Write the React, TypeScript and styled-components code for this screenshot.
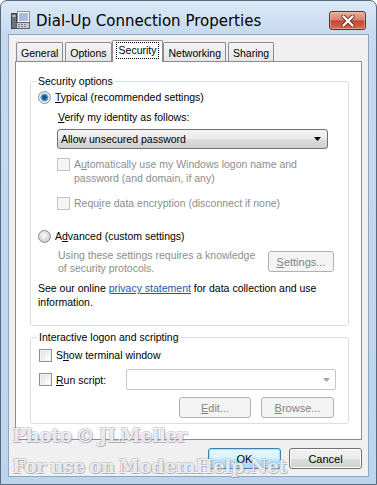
import React from 'react';
import styled, { createGlobalStyle } from 'styled-components';

const GlobalStyle = createGlobalStyle`
  html, body {
    margin: 0;
    padding: 0;
    background: #ffffff;
  }
  body {
    font-family: "Liberation Sans", Arial, sans-serif;
    font-size: 10.5px;
    color: #000;
  }
  * {
    box-sizing: border-box;
  }
`;

const Window = styled.div`
  position: relative;
  width: 377px;
  height: 485px;
  border: 1px solid #56697f;
  border-radius: 7px 7px 0 0;
  background: linear-gradient(180deg, #dce9f7 0px, #c6daf0 32px, #bcd4ee 100%);
  display: flex;
  flex-direction: column;
  overflow: hidden;
`;

const TitleBar = styled.div`
  height: 33px;
  flex: none;
  display: flex;
  align-items: center;
  padding: 6px 10px 0 10px;
`;

const TitleText = styled.div`
  flex: 1;
  margin-left: 6px;
  font-family: "DejaVu Sans", sans-serif;
  font-size: 15px;
  color: #000;
`;

const CloseButton = styled.div`
  width: 37px;
  height: 19px;
  border: 1px solid #6a2a22;
  border-radius: 3px;
  background: linear-gradient(180deg, #e9ab9c 0%, #d98572 45%, #c24a33 52%, #cf6b51 100%);
  box-shadow: inset 0 0 0 1px rgba(255, 210, 200, 0.45);
  display: flex;
  align-items: center;
  justify-content: center;
`;

const Client = styled.div`
  flex: 1;
  margin: 0 7px 7px;
  border: 1px solid #8ea4bf;
  background: #f0f0f0;
  display: flex;
  flex-direction: column;
  padding: 5px 6px 7px;
`;

const TabRow = styled.div`
  display: flex;
  align-items: flex-end;
  height: 21px;
  padding-left: 1px;
  gap: 2px;
  position: relative;
  z-index: 1;
`;

const Tab = styled.div<{ $active?: boolean }>`
  height: ${p => (p.$active ? 22 : 19)}px;
  margin: 0 ${p => (p.$active ? -2 : 0)}px ${p => (p.$active ? -1 : 0)}px;
  padding: ${p => (p.$active ? '2px 4px 0' : '3px 4px 0')};
  border: 1px solid #898c95;
  border-bottom: none;
  border-radius: 2px 2px 0 0;
  background: ${p => (p.$active ? '#ffffff' : 'linear-gradient(180deg, #f4f4f4 0%, #e6e6e6 100%)')};
  line-height: 14px;
  white-space: nowrap;
  position: relative;
  z-index: ${p => (p.$active ? 2 : 1)};
`;

const FocusText = styled.span`
  display: inline-block;
  outline: 1px dotted #000;
  outline-offset: 0;
  padding: 0 2px;
  line-height: 15px;
`;

const Panel = styled.div`
  flex: 1;
  border: 1px solid #898c95;
  background: #ffffff;
  padding: 12px 12px 15px 14px;
  display: flex;
  flex-direction: column;
  gap: 4px;
`;

const Group = styled.fieldset<{ $top: number; $right: number; $bottom: number; $left: number }>`
  margin: 0;
  min-width: 0;
  border: 1px solid #d5dfe5;
  border-radius: 3px;
  padding: ${p => `${p.$top}px ${p.$right}px ${p.$bottom}px ${p.$left}px`};
  display: flex;
  flex-direction: column;
`;

const Legend = styled.legend`
  padding: 0 2px;
  margin-left: -2px;
  line-height: 14px;
  font-size: 10.5px;
`;

const OptionRow = styled.div<{ $mt?: number; $disabled?: boolean }>`
  display: flex;
  align-items: flex-start;
  gap: 4px;
  margin-top: ${p => p.$mt ?? 0}px;
  line-height: 14px;
  white-space: nowrap;
  color: ${p => (p.$disabled ? '#8d8d8d' : '#000')};
`;

const Text = styled.div<{ $mt?: number; $disabled?: boolean; $lh?: number }>`
  margin-top: ${p => p.$mt ?? 0}px;
  line-height: ${p => p.$lh ?? 14}px;
  white-space: nowrap;
  color: ${p => (p.$disabled ? '#8d8d8d' : '#000')};
`;

const Key = styled.span`
  text-decoration: underline;
`;

const Link = styled.span`
  color: #1a5aa6;
  text-decoration: underline;
`;

const Radio = styled.span<{ $checked?: boolean }>`
  flex: none;
  width: 13px;
  height: 13px;
  margin-top: 1px;
  border-radius: 50%;
  border: 1px solid #8b8c8d;
  background: ${p =>
    p.$checked
      ? 'radial-gradient(circle at 50% 50%, #12456f 0, #1f6597 2px, #4fa6d6 3.4px, #dfeef7 4.4px, #f2f2f2 5.5px)'
      : 'radial-gradient(circle at 45% 40%, #fbfbfb 0, #e6e6e6 3px, #cfcfcf 6px)'};
`;

const Check = styled.span<{ $disabled?: boolean }>`
  flex: none;
  width: 13px;
  height: 13px;
  margin-top: 1px;
  border: 1px solid ${p => (p.$disabled ? '#c2c2c2' : '#8e8f8f')};
  background: ${p =>
    p.$disabled ? '#f4f4f4' : 'linear-gradient(135deg, #dcdcdc 0%, #f3f3f3 60%, #ffffff 100%)'};
  box-shadow: inset 0 0 0 1px ${p => (p.$disabled ? '#f7f7f7' : '#f4f4f4')};
`;

const Indent = styled.div`
  display: flex;
  flex-direction: column;
  padding-left: 20px;
`;

const Select = styled.div<{ $mt?: number }>`
  width: 271px;
  height: 20px;
  margin: ${p => p.$mt ?? 0}px 0 0 -1px;
  border: 1px solid #707070;
  border-radius: 3px;
  background: linear-gradient(180deg, #f3f3f3 0%, #ebebeb 50%, #dddddd 51%, #cfcfcf 100%);
  display: flex;
  align-items: center;
  justify-content: space-between;
  padding: 0 6px 0 3px;
`;

const Combo = styled.div`
  flex: 1;
  height: 21px;
  border: 1px solid #c6c6c6;
  border-radius: 2px;
  background: #ffffff;
  display: flex;
  align-items: center;
  justify-content: flex-end;
  padding-right: 5px;
`;

const Button = styled.div<{ $w: number; $variant?: 'normal' | 'default' | 'disabled' }>`
  flex: none;
  width: ${p => p.$w}px;
  height: 21px;
  border-radius: 3px;
  display: flex;
  align-items: center;
  justify-content: center;
  font-size: 11px;
  border: 1px solid
    ${p => (p.$variant === 'disabled' ? '#adb2b5' : p.$variant === 'default' ? '#3c7fb1' : '#707070')};
  color: ${p => (p.$variant === 'disabled' ? '#838383' : '#000')};
  background: ${p =>
    p.$variant === 'disabled'
      ? '#f4f4f4'
      : p.$variant === 'default'
      ? 'linear-gradient(180deg, #eaf6fd 0%, #d9f0fc 50%, #bee6fd 51%, #a7d9f5 100%)'
      : 'linear-gradient(180deg, #f2f2f2 0%, #ebebeb 50%, #dddddd 51%, #cfcfcf 100%)'};
  box-shadow: ${p =>
    p.$variant === 'default' ? 'inset 0 0 0 1px #9ee4f8' : p.$variant === 'disabled' ? 'none' : 'inset 0 0 0 1px #fcfcfc'};
`;

const SettingsRow = styled.div`
  display: flex;
  justify-content: space-between;
  align-items: flex-start;
  margin-top: 6px;
`;

const ScriptRow = styled.div`
  display: flex;
  align-items: center;
  margin-top: 7px;
  height: 21px;
`;

const ScriptLabel = styled.div`
  width: 87px;
  display: flex;
  align-items: center;
  gap: 4px;
  line-height: 14px;
`;

const ButtonRow = styled.div<{ $mt: number; $gap: number; $pr?: number }>`
  display: flex;
  justify-content: flex-end;
  gap: ${p => p.$gap}px;
  margin-top: ${p => p.$mt}px;
  padding-right: ${p => p.$pr ?? 0}px;
`;

const Watermark = styled.div`
  position: absolute;
  left: 11px;
  top: 419px;
  display: flex;
  flex-direction: column;
  font-family: "DejaVu Serif", serif;
  font-weight: bold;
  font-size: 19px;
  line-height: 31px;
  color: rgba(248, 248, 252, 0.82);
  text-shadow: 1px 1px 0 rgba(120, 120, 130, 0.45), -1px -1px 0 rgba(160, 160, 170, 0.3),
    1px -1px 0 rgba(160, 160, 170, 0.3), -1px 1px 0 rgba(160, 160, 170, 0.3);
  pointer-events: none;
  white-space: nowrap;
`;

const WatermarkLine = styled.span<{ $spacing: number; $word: number }>`
  letter-spacing: ${p => p.$spacing}px;
  word-spacing: ${p => p.$word}px;
`;

const AppIcon = () => (
  <svg width="19" height="19" viewBox="0 0 19 19">
    <rect x="0.5" y="2.5" width="5" height="15" fill="#6d7177" stroke="#3f4347" />
    <rect x="1.5" y="4" width="3" height="2" fill="#b9bec4" />
    <rect x="6.5" y="0.5" width="12" height="11" fill="#ffffff" stroke="#8a9099" />
    <path d="M8 3h9M8 5h9M8 7h9M8 9h9" stroke="#4a7cc4" strokeWidth="1" />
    <rect x="5.5" y="11.5" width="13" height="6" fill="#c9cdd2" stroke="#5d6167" />
    <path d="M7 13.5h2M10 13.5h2M13 13.5h2M7 15.5h2M10 15.5h2M13 15.5h2" stroke="#7a7f86" />
  </svg>
);

const CloseIcon = () => (
  <svg width="14" height="12" viewBox="0 0 14 12">
    <path d="M2.5 1.5l9 9M11.5 1.5l-9 9" stroke="#6b2a22" strokeWidth="4" strokeLinecap="round" />
    <path d="M2.5 1.5l9 9M11.5 1.5l-9 9" stroke="#ffffff" strokeWidth="2.4" strokeLinecap="round" />
  </svg>
);

const Arrow = ({ color }: { color: string }) => (
  <svg width="7" height="4" viewBox="0 0 7 4">
    <path d="M0 0h7L3.5 4z" fill={color} />
  </svg>
);

export default function App() {
  return (
    <>
      <GlobalStyle />
      <Window>
        <TitleBar>
          <AppIcon />
          <TitleText>Dial-Up Connection Properties</TitleText>
          <CloseButton>
            <CloseIcon />
          </CloseButton>
        </TitleBar>
        <Client>
          <TabRow>
            <Tab>General</Tab>
            <Tab>Options</Tab>
            <Tab $active>
              <FocusText>Security</FocusText>
            </Tab>
            <Tab>Networking</Tab>
            <Tab>Sharing</Tab>
          </TabRow>
          <Panel>
            <Group $top={2} $right={14} $bottom={16} $left={7}>
              <Legend>Security options</Legend>
              <OptionRow>
                <Radio $checked />
                <span>
                  <Key>T</Key>ypical (recommended settings)
                </span>
              </OptionRow>
              <Indent>
                <Text $mt={6}>
                  <Key>V</Key>erify my identity as follows:
                </Text>
                <Select $mt={5}>
                  <span>Allow unsecured password</span>
                  <Arrow color="#000" />
                </Select>
                <OptionRow $mt={8} $disabled style={{ marginLeft: -1 }}>
                  <Check $disabled />
                  <span>
                    A<Key>u</Key>tomatically use my Windows logon name and
                    <br />
                    password (and domain, if any)
                  </span>
                </OptionRow>
                <OptionRow $mt={11} $disabled style={{ marginLeft: -1 }}>
                  <Check $disabled />
                  <span>
                    Requ<Key>i</Key>re data encryption (disconnect if none)
                  </span>
                </OptionRow>
              </Indent>
              <OptionRow $mt={19}>
                <Radio />
                <span>
                  A<Key>d</Key>vanced (custom settings)
                </span>
              </OptionRow>
              <Indent>
                <SettingsRow>
                  <Text $disabled $lh={13}>
                    Using these settings requires a knowledge
                    <br />
                    of security protocols.
                  </Text>
                  <Button $w={66} $variant="disabled" style={{ marginTop: 2 }}>
                    <span>
                      <Key>S</Key>ettings...
                    </span>
                  </Button>
                </SettingsRow>
              </Indent>
              <Text $mt={6}>
                See our online <Link>privacy statement</Link> for data collection and use
                <br />
                information.
              </Text>
            </Group>
            <Group $top={4} $right={12} $bottom={5} $left={8}>
              <Legend>Interactive logon and scripting</Legend>
              <OptionRow>
                <Check />
                <span>
                  S<Key>h</Key>ow terminal window
                </span>
              </OptionRow>
              <ScriptRow>
                <ScriptLabel>
                  <Check style={{ marginTop: 0 }} />
                  <span>
                    <Key>R</Key>un script:
                  </span>
                </ScriptLabel>
                <Combo>
                  <Arrow color="#a6a6a6" />
                </Combo>
              </ScriptRow>
              <ButtonRow $mt={7} $gap={10} $pr={2}>
                <Button $w={72} $variant="disabled">
                  <span>
                    <Key>E</Key>dit...
                  </span>
                </Button>
                <Button $w={73} $variant="disabled">
                  <span>
                    <Key>B</Key>rowse...
                  </span>
                </Button>
              </ButtonRow>
            </Group>
          </Panel>
          <ButtonRow $mt={8} $gap={8}>
            <Button $w={73} $variant="default">OK</Button>
            <Button $w={73}>Cancel</Button>
          </ButtonRow>
        </Client>
        <Watermark>
          <WatermarkLine $spacing={-0.5} $word={-2}>Photo © JLMeller</WatermarkLine>
          <WatermarkLine $spacing={-0.5} $word={-2}>For use on ModemHelp.Net</WatermarkLine>
        </Watermark>
      </Window>
    </>
  );
}
